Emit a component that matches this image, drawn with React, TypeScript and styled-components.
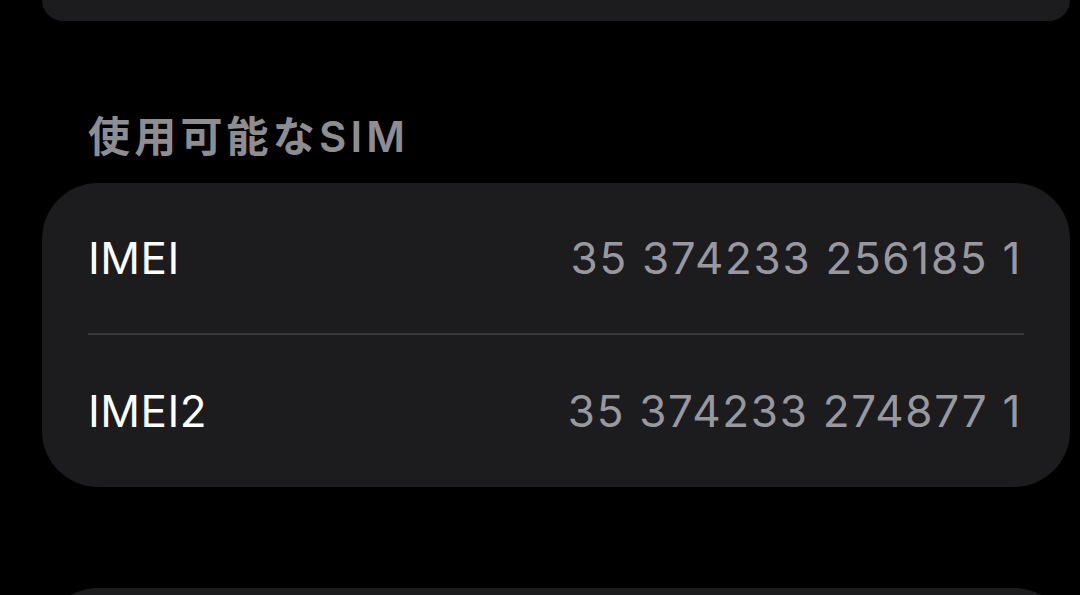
import React from "react";
import styled, { createGlobalStyle } from "styled-components";

const Global = createGlobalStyle`
  html, body { margin: 0; padding: 0; background: #000; }
  body { font-family: Inter, "Noto Sans CJK JP", sans-serif; -webkit-font-smoothing: antialiased; }
`;

const Page = styled.div`
  width: 1080px;
  height: 595px;
  overflow: hidden;
  background: #000;
  display: flex;
  flex-direction: column;
  padding: 0 10px 0 42px;
  box-sizing: border-box;
`;

const CutCard = styled.div`
  flex: none;
  height: 21px;
  background: #1c1c1e;
  border-radius: 0 0 60px 60px;
`;

const SectionHeader = styled.div`
  flex: none;
  margin: 85px 0 0 46px;
  height: 68px;
  font-size: 42px;
  line-height: 62px;
  font-weight: 600;
  color: #8d8d92;
  letter-spacing: 4.2px;
`;

const Card = styled.div`
  flex: none;
  margin-top: 9px;
  background: #1c1c1e;
  border-radius: 56px;
  padding: 0 46px;
  display: flex;
  flex-direction: column;
`;

const Row = styled.div<{ $divider?: boolean }>`
  height: 152px;
  display: flex;
  align-items: center;
  justify-content: space-between;
  box-sizing: border-box;
  border-bottom: ${(p) => (p.$divider ? "2px solid #38383a" : "none")};
`;

const Label = styled.span`
  font-size: 44px;
  color: #ffffff;
  font-weight: 400;
  letter-spacing: 0.5px;
`;

const Value = styled.span`
  font-size: 44px;
  color: #98989e;
  font-weight: 400;
  letter-spacing: 1.7px;
  margin-right: 2px;
`;

const BottomCard = styled.div`
  flex: none;
  margin-top: 101px;
  height: 80px;
  background: #1c1c1e;
  border-radius: 56px 56px 0 0;
`;

export default function App() {
  return (
    <>
      <Global />
      <Page>
        <CutCard />
        <SectionHeader>使用可能なSIM</SectionHeader>
        <Card>
          <Row $divider>
            <Label>IMEI</Label>
            <Value>35 374233 256185 1</Value>
          </Row>
          <Row>
            <Label>IMEI2</Label>
            <Value>35 374233 274877 1</Value>
          </Row>
        </Card>
        <BottomCard />
      </Page>
    </>
  );
}
